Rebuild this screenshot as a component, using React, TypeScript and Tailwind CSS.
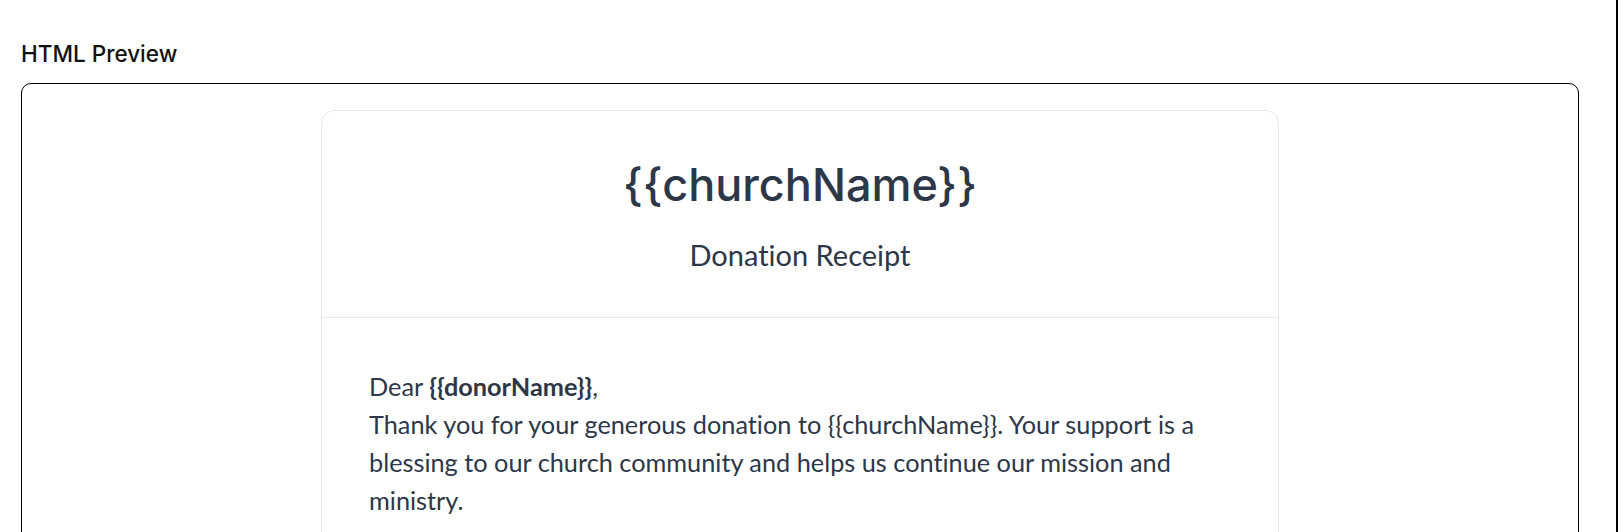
import React from "react";

export default function App() {
  const lato = { fontFamily: 'Lato, "Noto Sans", sans-serif' };
  return (
    <div className="flex h-[532px] w-[1624px] overflow-hidden bg-white">
      <div className="h-full w-[1616px] shrink-0 pl-[21px] pt-[41px]">
        <div
          className="text-[22.5px] leading-[26px] font-medium text-[#111]"
          style={{ fontFamily: 'Inter, "Liberation Sans", Arial, sans-serif' }}
        >
          HTML Preview
        </div>
        <div className="mt-[16px] h-[600px] w-[1558px] rounded-[10px] border-[1.5px] border-black pt-[26px]">
          <div className="mx-auto w-[958px] rounded-[13px] border border-[#e2e8f0] bg-white pb-[200px]">
            <div className="border-b border-[#e2e8f0] pt-[46px] pb-[45px] text-center text-[#2d3748]">
              <div
                className="text-[45px] leading-[56px] font-medium"
                style={{ fontFamily: 'Inter, "Noto Sans", sans-serif' }}
              >
                {"{{churchName}}"}
              </div>
              <div
                className="mt-[24px] text-[29px] leading-[35px] [font-variant-ligatures:none]"
                style={lato}
              >
                Donation Receipt
              </div>
            </div>
            <div
              className="px-[47px] pt-[49px] text-[25.3px] leading-[38px] text-[#2d3748] [font-variant-ligatures:none]"
              style={lato}
            >
              <p>
                Dear <strong className="font-bold">{"{{donorName}}"}</strong>,
              </p>
              <p>
                Thank you for your generous donation to {"{{churchName}}"}. Your support is a
                blessing to our church community and helps us continue our mission and ministry.
              </p>
            </div>
          </div>
        </div>
      </div>
      <div className="h-full w-[1.5px] shrink-0 bg-black" />
    </div>
  );
}
